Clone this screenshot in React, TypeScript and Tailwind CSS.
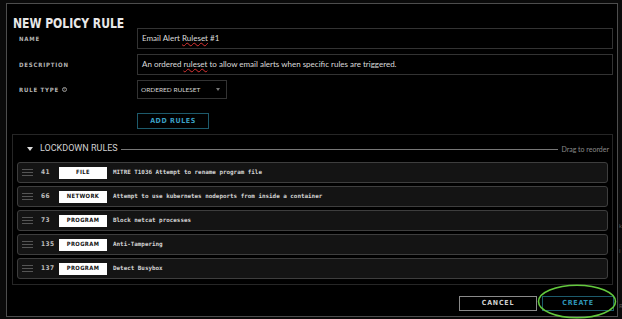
import React from "react";

type Rule = { id: number; kind: string; text: string };

const rules: Rule[] = [
  { id: 41, kind: "FILE", text: "MITRE T1036 Attempt to rename program file" },
  { id: 66, kind: "NETWORK", text: "Attempt to use kubernetes nodeports from inside a container" },
  { id: 73, kind: "PROGRAM", text: "Block netcat processes" },
  { id: 135, kind: "PROGRAM", text: "Anti-Tampering" },
  { id: 137, kind: "PROGRAM", text: "Detect Busybox" },
];

const din = { fontFamily: '"DejaVu Sans Condensed", "DejaVu Sans", sans-serif' };
const mono = { fontFamily: '"DejaVu Sans Mono", "Liberation Mono", monospace' };
const lato = { fontFamily: 'Lato, "Open Sans", sans-serif' };

const Label = ({ children }: { children: React.ReactNode }) => (
  <div
    className="w-[118px] shrink-0 text-[6px] font-bold tracking-[0.8px] text-[#b5b5b5] flex items-center gap-[3px]"
    style={din}
  >
    {children}
  </div>
);

const Spell = ({ children }: { children: React.ReactNode }) => (
  <span className="underline decoration-wavy decoration-[#d33] decoration-[0.7px] underline-offset-[1px]">
    {children}
  </span>
);

const App = () => {
  return (
    <div className="w-[622px] h-[319px] bg-[#0a0a0a] flex overflow-hidden relative">
      <div className="w-[6px] shrink-0" />

      {/* Modal */}
      <div className="mt-[3px] w-[612px] h-[314px] shrink-0 border border-[#4d4d4d] bg-black flex flex-col">
        <div className="h-[24px] pl-[6px] pt-[6px]">
          <span
            className="inline-block origin-left scale-x-[0.86] text-[14px] leading-[16px] font-bold text-[#e8e8e8] whitespace-nowrap"
            style={din}
          >
            NEW POLICY RULE
          </span>
        </div>

        <div className="pl-[12px] pr-[4px] flex flex-col">
          <div className="flex">
            <Label>NAME</Label>
            <div
              className="flex-1 h-[21px] border border-[#333] pl-[4px] text-[8px] leading-[19px] text-[#dcdcdc] whitespace-nowrap"
              style={lato}
            >
              Email Alert <Spell>Ruleset</Spell> #1
            </div>
          </div>

          <div className="flex mt-[5px]">
            <Label>DESCRIPTION</Label>
            <div
              className="flex-1 h-[21px] border border-[#333] pl-[4px] text-[8px] leading-[19px] text-[#dcdcdc] whitespace-nowrap"
              style={lato}
            >
              An ordered <Spell>ruleset</Spell> to allow email alerts when specific rules are triggered.
            </div>
          </div>

          <div className="flex mt-[5px]">
            <Label>
              RULE TYPE
              <span className="w-[5px] h-[5px] rounded-full border-[0.7px] border-[#999] text-[4px] leading-[4px] flex items-center justify-center font-normal">
                ?
              </span>
            </Label>
            <div
              className="w-[90px] h-[19px] border border-[#333] flex items-center justify-between pl-[3px] pr-[6px] text-[6.5px] text-[#d5d5d5]"
              style={lato}
            >
              <span>ORDERED RULESET</span>
              <span className="w-0 h-0 border-l-[2.5px] border-r-[2.5px] border-t-[3px] border-l-transparent border-r-transparent border-t-[#777]" />
            </div>
          </div>

          <div className="flex mt-[14px]">
            <div className="w-[118px] shrink-0" />
            <div
              className="w-[72px] h-[16px] border border-[#1d5a6b] flex items-center justify-center text-[7px] font-bold tracking-[0.6px] text-[#3a9fc3]"
              style={din}
            >
              ADD RULES
            </div>
          </div>
        </div>

        {/* Lockdown rules panel */}
        <div className="ml-[5px] mr-[4px] mt-[5px] h-[151px] border border-[#262626] px-[4px] pt-[6px] flex flex-col">
          <div className="h-[16px] flex items-center">
            <span className="ml-[10px] w-0 h-0 border-l-[3px] border-r-[3px] border-t-[4px] border-l-transparent border-r-transparent border-t-[#ddd]" />
            <span className="ml-[7px] text-[9px] text-[#d0d0d0]" style={{ fontFamily: "Roboto, sans-serif" }}>
              LOCKDOWN RULES
            </span>
            <span className="flex-1 h-px bg-[#777] mx-[3px]" />
            <span className="text-[7px] text-[#8a8a8a] -mr-[1px]" style={lato}>
              Drag to reorder
            </span>
          </div>

          <div className="mt-[5px] flex flex-col gap-[3px]">
            {rules.map((r) => (
              <div
                key={r.id}
                className="h-[21px] rounded-[3px] border border-[#3e3e3e] bg-[#141414] flex items-center"
              >
                <div className="ml-[4px] w-[11px] flex flex-col gap-[2px]">
                  <span className="h-px bg-[#555]" />
                  <span className="h-px bg-[#555]" />
                  <span className="h-px bg-[#555]" />
                </div>
                <span
                  className="ml-[8px] w-[18px] text-[6.5px] font-bold text-[#bdbdbd] tracking-[0.4px]"
                  style={din}
                >
                  {r.id}
                </span>
                <span
                  className="w-[48px] h-[12px] bg-white flex items-center justify-center text-[5.8px] font-bold tracking-[0.4px] text-[#111]"
                  style={din}
                >
                  {r.kind}
                </span>
                <span className="ml-[6px] text-[5.9px] font-bold text-[#d6d6d6]" style={mono}>
                  {r.text}
                </span>
              </div>
            ))}
          </div>
        </div>

        <div className="mt-[11px] pr-[3px] flex justify-end gap-[5px]">
          <div
            className="w-[78px] h-[15px] border border-[#8a8a8a] flex items-center justify-center text-[7px] font-bold tracking-[0.8px] text-[#cfcfcf]"
            style={din}
          >
            CANCEL
          </div>
          <div
            className="w-[72px] h-[15px] border border-[#1d5a6b] flex items-center justify-center text-[7px] font-bold tracking-[0.8px] text-[#2f95b8]"
            style={din}
          >
            CREATE
          </div>
        </div>
      </div>

      {/* background content peeking out on the right */}
      <div
        className="w-[4px] shrink-0 flex flex-col pt-[221px] gap-[16px] pl-[1px] text-[6px] text-[#555]"
        style={lato}
      >
        <span>k</span>
        <span>l</span>
        <span className="mt-[30px]">R</span>
      </div>

      {/* green annotation ellipse */}
      <svg className="absolute left-[537px] top-[284px]" width="80" height="35" viewBox="0 0 80 35">
        <ellipse cx="40" cy="17.5" rx="38.5" ry="16.3" fill="none" stroke="#63c93d" strokeWidth="1.6" />
      </svg>
    </div>
  );
};

export default App;
